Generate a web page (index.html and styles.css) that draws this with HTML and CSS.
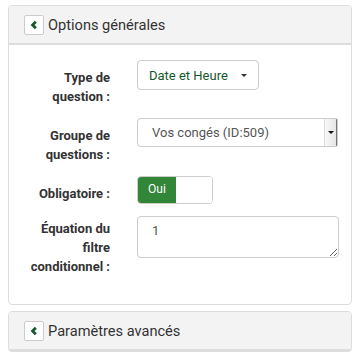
FILE: index.html
```html
<!DOCTYPE html>
<html lang="fr">
<head>
  <meta charset="UTF-8">
  <meta name="viewport" content="width=device-width, initial-scale=1.0">
  <title>Options générales</title>
  <link rel="stylesheet" href="styles.css">
</head>
<body>
  <div class="panel">
    <div class="panel-heading">
      <span class="toggle-btn">
        <svg width="8" height="10" viewBox="0 0 8 10"><polyline points="5.8,1.8 2.6,5 5.8,8.2" fill="none" stroke="#14582b" stroke-width="2.8"/></svg>
      </span>
      <span class="panel-title">Options générales</span>
    </div>
    <div class="panel-body">
      <div class="form-row">
        <label class="control-label">Type de question :</label>
        <div class="field">
          <button class="dropdown-btn">Date et Heure <span class="caret"></span></button>
        </div>
      </div>

      <div class="form-row">
        <label class="control-label">Groupe de questions :</label>
        <div class="field">
          <div class="native-select">
            <span class="select-text">Vos congés (ID:509)</span>
            <span class="select-arrow"><span class="caret small"></span></span>
          </div>
        </div>
      </div>

      <div class="form-row">
        <label class="control-label">Obligatoire :</label>
        <div class="field">
          <div class="switch">
            <span class="switch-on">Oui</span>
            <span class="switch-off"></span>
          </div>
        </div>
      </div>

      <div class="form-row">
        <label class="control-label label-tall">Équation du filtre conditionnel :</label>
        <div class="field">
          <textarea class="form-textarea">1</textarea>
        </div>
      </div>
    </div>
  </div>

  <div class="panel">
    <div class="panel-heading">
      <span class="toggle-btn">
        <svg width="8" height="10" viewBox="0 0 8 10"><polyline points="5.8,1.8 2.6,5 5.8,8.2" fill="none" stroke="#14582b" stroke-width="2.8"/></svg>
      </span>
      <span class="panel-title">Paramètres avancés</span>
    </div>
  </div>
</body>
</html>
```

FILE: styles.css
```css
body {
  margin: 0;
  padding: 5px 8px 0;
  background-color: #fff;
  color: #333;
  font-family: Roboto, "Noto Sans", sans-serif;
}

.panel {
  border: 1px solid #ddd;
  border-radius: 4px;
  background-color: #fff;
  margin-bottom: 6px;
}

.panel-heading {
  display: flex;
  align-items: center;
  height: 37px;
  padding: 0 15px;
  background-color: #f3f3f3;
  border-bottom: 2px solid #ddd;
  border-radius: 4px 4px 0 0;
}

.toggle-btn {
  display: flex;
  align-items: center;
  justify-content: center;
  width: 18px;
  height: 18px;
  border: 1px solid #ccc;
  border-radius: 2px;
  background-color: #fff;
}

.panel-title {
  margin-left: 4px;
  font-size: 14.6px;
  color: #333;
}

.panel-body {
  padding: 15px 13px 28px 0;
}

.form-row {
  display: grid;
  grid-template-columns: 101px 1fr;
  column-gap: 27px;
  margin-bottom: 12px;
}

.form-row:last-child {
  margin-bottom: 0;
}

.control-label {
  padding: 8px 0 0 16px;
  text-align: right;
  font-size: 13px;
  font-weight: bold;
  line-height: 19px;
  color: #333;
}

.label-tall {
  padding-top: 3px;
}

.dropdown-btn {
  display: flex;
  align-items: center;
  height: 30px;
  padding: 0 11px 0 11px;
  border: 1px solid #ccc;
  border-radius: 4px;
  background-color: #fff;
  font-family: inherit;
  font-size: 13px;
  color: #14582b;
}

.caret {
  display: inline-block;
  margin-left: 13px;
  border-top: 3px solid #333;
  border-left: 3px solid transparent;
  border-right: 3px solid transparent;
}

.caret.small {
  margin: 0;
  border-top-color: #111;
}

.native-select {
  display: flex;
  height: 29px;
  width: 201px;
  box-sizing: border-box;
  border: 1px solid #ccc;
  border-radius: 4px 2px 2px 4px;
  overflow: hidden;
}

.select-text {
  flex: 1;
  padding-left: 14px;
  line-height: 27px;
  font-size: 13px;
  color: #555;
}

.select-arrow {
  display: flex;
  align-items: center;
  justify-content: center;
  width: 11px;
  background: linear-gradient(to right, #f8f8f8, #e6e6e6);
  border-left: 1px solid #ddd;
  border-right: 1px solid #777;
}

.switch {
  display: flex;
  width: 76px;
  height: 28px;
  box-sizing: border-box;
  border: 1px solid #ccc;
  border-radius: 4px;
  overflow: hidden;
}

.switch-on {
  width: 38px;
  background-color: #328637;
  color: #fff;
  font-size: 12px;
  text-align: center;
  line-height: 24px;
}

.switch-off {
  flex: 1;
  background-color: #fff;
}

.form-textarea {
  display: block;
  width: 202px;
  height: 42px;
  box-sizing: border-box;
  padding: 6px 14px;
  border: 1px solid #ccc;
  border-radius: 4px;
  font-family: inherit;
  font-size: 13px;
  color: #555;
  resize: vertical;
}
```
